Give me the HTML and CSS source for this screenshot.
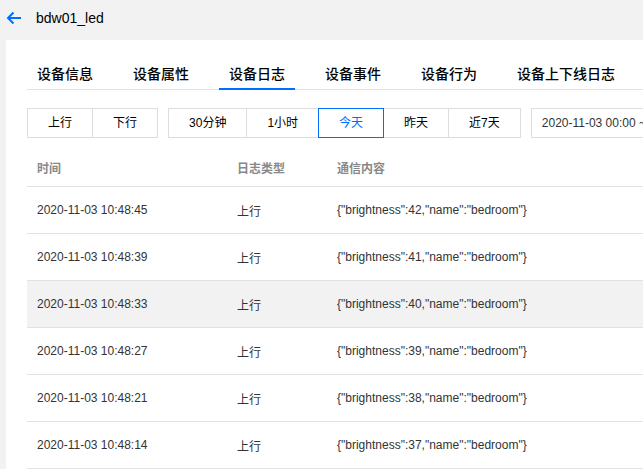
FILE: index.html
```html
<!DOCTYPE html>
<html lang="zh">
<head>
<meta charset="utf-8">
<link rel="stylesheet" href="styles.css">
</head>
<body>
<header class="topbar">
  <svg class="back" width="16" height="14" viewBox="0 0 16 14"><path d="M15 7H2M7.5 1.5L2 7l5.5 5.5" fill="none" stroke="#006eff" stroke-width="2"/></svg>
  <span class="title">bdw01_led</span>
</header>
<main class="panel">
  <nav class="tabs">
    <span class="tab">设备信息</span>
    <span class="tab">设备属性</span>
    <span class="tab active">设备日志</span>
    <span class="tab">设备事件</span>
    <span class="tab">设备行为</span>
    <span class="tab">设备上下线日志</span>
  </nav>
  <div class="toolbar">
    <div class="group">
      <span class="btn">上行</span>
      <span class="btn">下行</span>
    </div>
    <div class="group">
      <span class="btn">30分钟</span>
      <span class="btn">1小时</span>
      <span class="btn active">今天</span>
      <span class="btn">昨天</span>
      <span class="btn">近7天</span>
    </div>
    <div class="date">2020-11-03 00:00 ~ 2020-11-03 23:59</div>
  </div>
  <table class="log">
    <thead>
      <tr><th class="c1">时间</th><th class="c2">日志类型</th><th>通信内容</th></tr>
    </thead>
    <tbody>
      <tr><td>2020-11-03 10:48:45</td><td>上行</td><td>{"brightness":42,"name":"bedroom"}</td></tr>
      <tr><td>2020-11-03 10:48:39</td><td>上行</td><td>{"brightness":41,"name":"bedroom"}</td></tr>
      <tr class="hover"><td>2020-11-03 10:48:33</td><td>上行</td><td>{"brightness":40,"name":"bedroom"}</td></tr>
      <tr><td>2020-11-03 10:48:27</td><td>上行</td><td>{"brightness":39,"name":"bedroom"}</td></tr>
      <tr><td>2020-11-03 10:48:21</td><td>上行</td><td>{"brightness":38,"name":"bedroom"}</td></tr>
      <tr><td>2020-11-03 10:48:14</td><td>上行</td><td>{"brightness":37,"name":"bedroom"}</td></tr>
    </tbody>
  </table>
</main>
</body>
</html>
```
FILE: styles.css
```css
html, body {
  margin: 0;
  padding: 0;
  background: #f2f2f2;
  overflow: hidden;
  width: 643px;
  height: 469px;
}
body {
  font-family: "Liberation Sans", "Noto Sans CJK SC", sans-serif;
  font-size: 12px;
  color: #333;
}
.topbar {
  height: 40px;
  display: flex;
  align-items: center;
  padding-left: 6px;
  box-sizing: border-box;
  padding-bottom: 4px;
}
.back {
  display: block;
}
.title {
  font-size: 14px;
  color: #000;
  margin-left: 14px;
}
.panel {
  margin-left: 6px;
  width: 800px;
  min-height: 500px;
  background: #fff;
  padding: 20px 0 0 21px;
  box-sizing: border-box;
}
.tabs {
  display: flex;
  gap: 20px;
  border-bottom: 1px solid #e2e2e2;
}
.tab {
  height: 30px;
  box-sizing: border-box;
  line-height: 28px;
  padding: 0 10px;
  font-size: 14px;
  font-weight: 500;
  color: #000;
  border-bottom: 2px solid transparent;
  margin-bottom: -1px;
}
.tab.active {
  border-bottom-color: #006eff;
}
.toolbar {
  display: flex;
  gap: 10px;
  margin-top: 18px;
}
.group {
  display: flex;
}
.btn {
  height: 30px;
  box-sizing: border-box;
  line-height: 28px;
  padding: 0 20px;
  border: 1px solid #ddd;
  color: #000;
  background: #fff;
  position: relative;
}
.btn + .btn {
  margin-left: -1px;
}
.btn.active {
  border-color: #006eff;
  color: #006eff;
  z-index: 1;
}
.date {
  height: 30px;
  box-sizing: border-box;
  line-height: 28px;
  padding: 0 10px;
  border: 1px solid #ddd;
  color: #333;
  white-space: nowrap;
  width: 260px;
}
.log {
  margin-top: 10px;
  border-collapse: collapse;
  width: 779px;
}
.log th {
  text-align: left;
  height: 38px;
  padding: 0 0 0 10px;
  font-weight: 600;
  color: #888;
  border-bottom: 1px solid #e2e2e2;
}
.log th.c1 {
  width: 190px;
}
.log th.c2 {
  width: 90px;
}
.log td {
  height: 46px;
  padding: 0 0 0 10px;
  border-bottom: 1px solid #e2e2e2;
  color: #333;
}
.log tr.hover td {
  background: #f2f2f2;
}
```
